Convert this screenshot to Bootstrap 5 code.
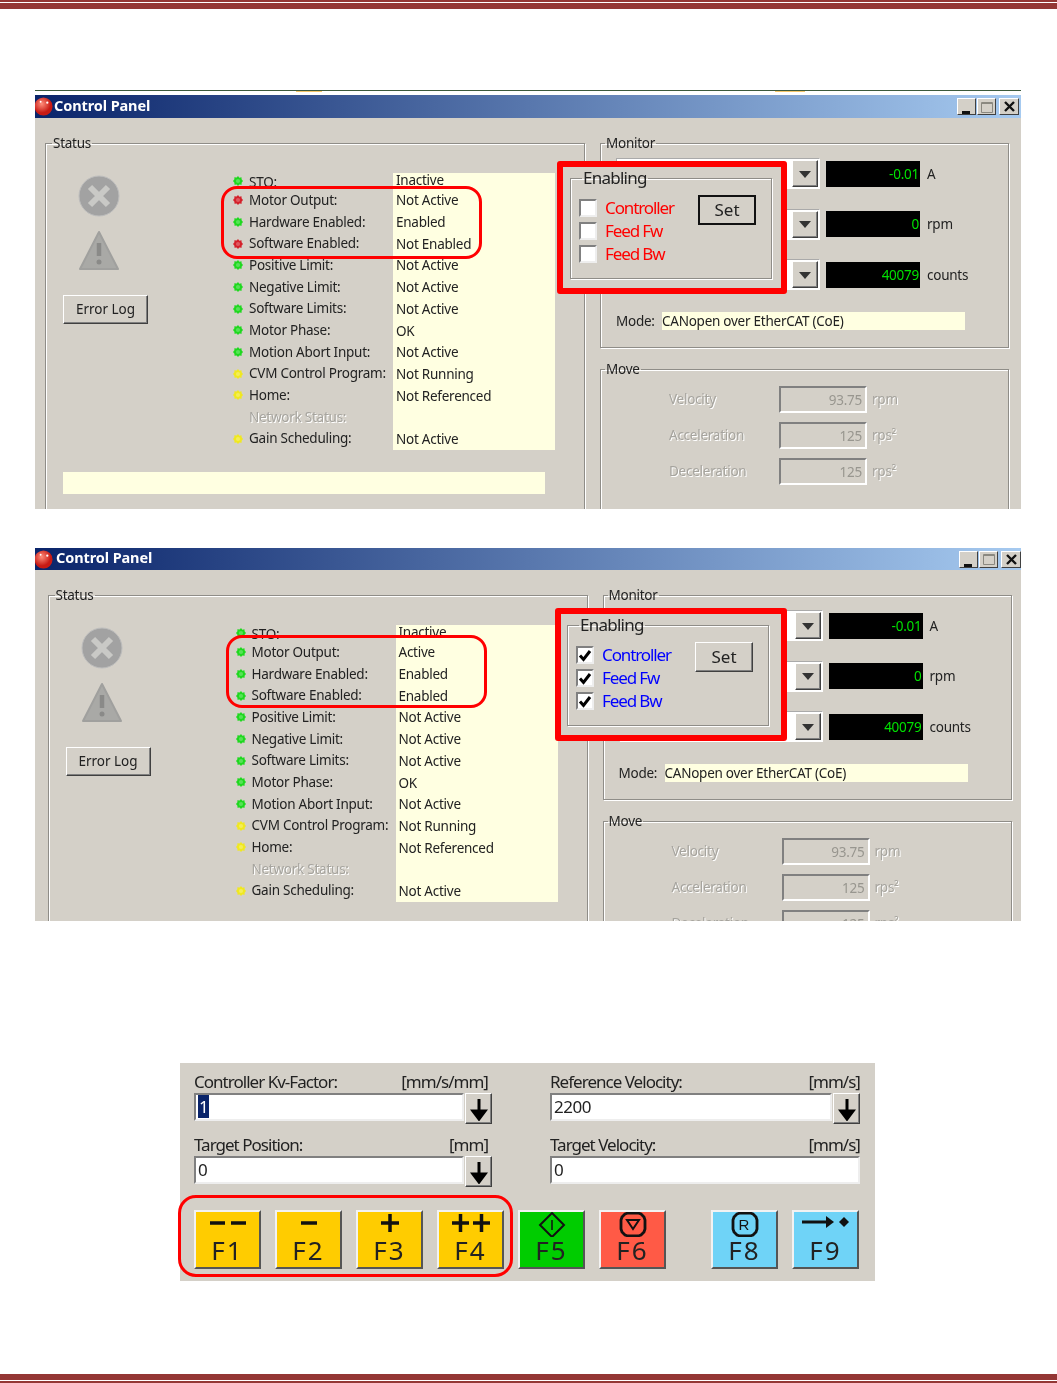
<!DOCTYPE html>
<html lang="en">
<head>
<meta charset="UTF-8">
<title>Control Panel</title>
<link href="https://cdn.jsdelivr.net/npm/bootstrap@5.3.0/dist/css/bootstrap.min.css" rel="stylesheet">
<style>
    body { background: #fff; font-family: "Noto Sans", sans-serif; font-size: 13.5px; letter-spacing: -.25px; color: #222; }
    .page { height: 1383px; overflow: hidden; }
    .rule-top { height: 9px; border-top: 2px solid #943634; flex: none; }
    .rule-top::after { content: ""; display: block; height: 6px; margin-top: 1px; background: #943634; }
    .rule-bottom { height: 9px; border-bottom: 2px solid #943634; flex: none; }
    .rule-bottom::before { content: ""; display: block; height: 6px; background: #943634; }

    .shot { position: relative; width: 986px; margin-left: 35px; overflow: hidden; flex: none; filter: blur(.4px); }
    .shot-one { height: 419px; margin-top: 81px; }
    .shot-two { height: 373px; margin-top: 39px; }
    .strip { height: 5px; border-top: 1px solid #3c5a3c; background: #fff; }
    .strip::before { content: ""; display: block; height: 1px; background: linear-gradient(90deg, transparent 261px, #f5c66a 261px, #f5c66a 287px, transparent 287px, transparent 740px, #f5c66a 740px, #f5c66a 770px, transparent 770px); }
    .title-bar { background: linear-gradient(90deg, #0a246a, #a6caf0); color: #fff; font-weight: 700; font-size: 14.5px; letter-spacing: -.1px; }
    .shot-one .title-bar { height: 23px; padding-right: 2px; }
    .shot-two .title-bar { height: 22px; }
    .title-ball { width: 19px; height: 19px; margin-left: -1px; }
    .title-name { margin: 0 0 2px 1px; }
    .shot-two .title-name { margin-left: 3px; }
    .win-btn { width: 19px; height: 17px; background: #d4d0c8; border: 1px solid; border-color: #fff #404040 #404040 #fff; }
    .win-max { margin-left: 1px; }
    .win-close { width: 20px; margin-left: 3px; }
    .panel-body { background: #d4d0c8; height: 400px; }
    .shot-one .panel-body { padding: 17px 0 0 10px; }
    .shot-two .panel-body { padding: 17px 0 0 12.5px; }

    .etched { border: 1px solid #8f8d88; box-shadow: inset 1px 1px 0 #fff, 1px 1px 0 #fff; padding: 0; }
    .etched legend { float: none; width: auto; font-size: 13.5px; line-height: 16px; margin: 0 0 0 6px; padding: 0 1px; color: #222; }
    .side .etched legend { margin-left: 4px; }
    .status-box { width: 540px; height: 520px; flex: none; }
    .status-top { padding-top: 22px; }
    .side { width: 409px; margin-left: 15px; flex: none; }
    .status-left { width: 186px; padding: 2px 0 0 17px; flex: none; }
    .status-icon { width: 42px; height: 42px; display: block; margin-left: 15px; }
    .status-gap { margin-top: 13px; }
    .xp-btn { background: #d4d0c8; border: 1px solid; border-color: #fff #404040 #404040 #fff; box-shadow: inset -1px -1px 0 #808080; color: #222; }
    .log-btn { width: 85px; height: 29px; margin-top: 23px; font-size: 13.5px; }
    .status-labels { width: 161px; flex: none; }
    .status-line { height: 21.7px; line-height: 23.7px; white-space: nowrap; }
    .status-line:first-child { height: 16.4px; line-height: 14px; }
    .status-name { margin-top: 1px; }
    .status-dot { width: 10px; height: 10px; margin: 0 6px 0 1px; flex: none; }
    .status-off { color: #a6a49e; text-shadow: 1px 1px 0 #fff; padding-left: 17px; }
    .status-values { width: 162px; height: 277px; background: #ffffe1; padding-left: 3px; flex: none; }
    .status-bar { width: 482px; height: 22px; background: #ffffe1; margin: 22px 0 0 17px; }

    .monitor-box { height: 213px; }
    .monitor-inner { padding: 7px 0 0 15px; }
    .combo { width: 204px; height: 31px; background: #fff; border: 1px solid; border-color: #aaa #fff #fff #aaa; padding: 1px; flex: none; }
    .combo-btn { width: 26px; height: 27px; }
    .combo-btn::after { content: ""; border: 6px solid transparent; border-top: 7px solid #333; margin-top: 7px; }
    .readout { width: 94px; height: 26px; background: #000; color: #00e000; margin-left: 6px; padding-right: 1px; line-height: 27px; flex: none; }
    .readout-unit { margin: 1px 0 0 7px; }
    .monitor-row { margin-bottom: 19.5px; }
    .mode-row { margin-top: 21px; }
    .mode-label { width: 46px; flex: none; }
    .mode-value { width: 303px; height: 18px; line-height: 18px; background: #ffffe1; }
    .move-box { margin-top: 13px; height: 300px; }
    .move-inner { padding: 9px 0 0 68px; }
    .move-row { height: 27px; margin-bottom: 9px; color: #a6a49e; text-shadow: 1px 1px 0 #fff; }
    .move-label { width: 110px; }
    .move-value { width: 88px; height: 27px; line-height: 25px; border: 2px solid; border-color: #808080 #fff #fff #808080; padding-right: 3px; margin-right: 5px; color: #98968f; text-shadow: none; }

    .hilite { position: absolute; border: 3.500px solid #f00; border-radius: 16px; pointer-events: none; }
    .hilite-status { width: 261px; height: 73px; }
    .shot-one .hilite-status { left: 186px; top: 96px; }
    .shot-two .hilite-status { left: 191px; top: 87px; }
    .hilite-keys { left: -2px; top: 132px; width: 335px; height: 82px; border-radius: 18px; }
    .enable-cover { position: absolute; height: 133px; border: 6px solid #f00; border-radius: 3px; background: #d4d0c8; }
    .shot-one .enable-cover { left: 522px; top: 71px; width: 230px; padding-left: 7px; }
    .shot-two .enable-cover { left: 520px; top: 60px; width: 232px; padding-left: 6px; }
    .enable-box { width: 202px; height: 111px; margin-top: 1px; }
    .enable-box legend { font-size: 17px; line-height: 20px; margin-left: 11px; letter-spacing: -.75px; }
    .enable-inner { padding: 11px 0 0 8px; }
    .check-col { width: 94px; flex: none; }
    .check-row { font-size: 17px; line-height: 18px; height: 18px; letter-spacing: -1.1px; white-space: nowrap; }
    .check-row + .check-row { margin-top: 5px; }
    .check-box { width: 18px; height: 18px; background: #fff; border: 2px solid; border-color: #808080 #eee #eee #808080; margin-right: 8px; flex: none; }
    .check-on { color: #00f; }
    .check-off { color: #f00; }
    .set-btn { width: 58px; height: 30px; margin: -4px 0 0 25px; font-size: 17px; line-height: 26px; letter-spacing: 0; }
    .set-focus { border: 2px solid #111; box-shadow: none; }

    .drive-panel { position: relative; width: 695px; height: 218px; margin: 142px 0 0 180px; background: #d4d0c8; padding: 9px 0 0 14px; flex: none; filter: blur(.4px); font-size: 17px; letter-spacing: -.45px; }
    .drive-col { width: 298px; flex: none; }
    .drive-col-wide { width: 310px; margin-left: 58px; flex: none; }
    .drive-label { height: 21px; line-height: 19px; letter-spacing: -.98px; }
    .drive-input { height: 28px; line-height: 24px; background: #fff; border: 2px solid; border-color: #808080 #eee #eee #808080; padding-left: 2px; }
    .drive-field { height: 42px; }
    .drive-select { background: #0a246a; color: #fff; padding: 0 1px; }
    .drive-drop { width: 27px; height: 31px; flex: none; margin-left: 1px; }
    .fkey-row { margin-top: 12px; letter-spacing: 2px; }
    .fkey { width: 67px; height: 59px; border: 2px solid; border-color: #f2f2f2 #555 #555 #f2f2f2; font-size: 26px; line-height: 26px; flex: none; padding: 0; color: #222; margin-left: 14px; }
    .fkey:first-child { margin-left: 0; }
    .fkey-wide { margin-left: 45px; }
    .fkey svg { display: block; width: 50px; height: 25px; margin: 0 auto; }
    .fkey-yellow { background: #ffcc00; }
    .fkey-green { background: #00cc00; }
    .fkey-red { background: #ff5a46; }
    .fkey-blue { background: #6fd3f7; }
</style>
</head>
<body>
<div class="page d-flex flex-column">
    <div class="rule-top"></div>
    <div id="shotOne" class="shot shot-one"></div>
    <div id="shotTwo" class="shot shot-two"></div>

    <div class="drive-panel">
        <div class="d-flex">
            <div class="drive-col">
                <div class="drive-label d-flex justify-content-between"><span>Controller Kv-Factor:</span><span class="me-1">[mm/s/mm]</span></div>
                <div class="d-flex drive-field">
                    <div class="drive-input flex-grow-1"><span class="drive-select">1</span></div>
                    <div class="xp-btn drive-drop d-flex justify-content-center align-items-center"><svg width="18" height="24" viewBox="0 0 18 24"><path d="M9 2v18M3 14l6 8 6-8z" stroke="#000" stroke-width="3" fill="#000"/></svg></div>
                </div>
                <div class="drive-label d-flex justify-content-between"><span>Target Position:</span><span class="me-1">[mm]</span></div>
                <div class="d-flex drive-field">
                    <div class="drive-input flex-grow-1">0</div>
                    <div class="xp-btn drive-drop d-flex justify-content-center align-items-center"><svg width="18" height="24" viewBox="0 0 18 24"><path d="M9 2v18M3 14l6 8 6-8z" stroke="#000" stroke-width="3" fill="#000"/></svg></div>
                </div>
            </div>
            <div class="drive-col-wide">
                <div class="drive-label d-flex justify-content-between"><span>Reference Velocity:</span><span>[mm/s]</span></div>
                <div class="d-flex drive-field">
                    <div class="drive-input flex-grow-1">2200</div>
                    <div class="xp-btn drive-drop d-flex justify-content-center align-items-center"><svg width="18" height="24" viewBox="0 0 18 24"><path d="M9 2v18M3 14l6 8 6-8z" stroke="#000" stroke-width="3" fill="#000"/></svg></div>
                </div>
                <div class="drive-label d-flex justify-content-between"><span>Target Velocity:</span><span>[mm/s]</span></div>
                <div class="drive-input">0</div>
            </div>
        </div>
        <div class="d-flex fkey-row" id="fkeys"></div>
        <div class="hilite hilite-keys"></div>
    </div>

    <div class="rule-bottom mt-auto"></div>
</div>

<script>
const dot = c => `<svg class="status-dot" viewBox="0 0 12 12"><path d="M6 0l1.600 2 2.600-.6.1 2.600L12 6l-1.700 2 .1 2.600-2.800-.4L6 12l-1.600-1.800-2.600.4-.1-2.600L0 6l1.700-2-.1-2.600 2.800.4z" fill="${c}"/><circle cx="6" cy="6" r="2.500" fill="#fff" opacity=".25"/></svg>`;
const GREEN = '#1fd81f', RED = '#d4202a', YEL = '#f0e820';

function statusRows(live) {
    return [
        ['STO:', GREEN, 'Inactive'],
        ['Motor Output:', live ? GREEN : RED, live ? 'Active' : 'Not Active'],
        ['Hardware Enabled:', GREEN, 'Enabled'],
        ['Software Enabled:', live ? GREEN : RED, live ? 'Enabled' : 'Not Enabled'],
        ['Positive Limit:', GREEN, 'Not Active'],
        ['Negative Limit:', GREEN, 'Not Active'],
        ['Software Limits:', GREEN, 'Not Active'],
        ['Motor Phase:', GREEN, 'OK'],
        ['Motion Abort Input:', GREEN, 'Not Active'],
        ['CVM Control Program:', YEL, 'Not Running'],
        ['Home:', YEL, 'Not Referenced'],
        ['Network Status:', null, ''],
        ['Gain Scheduling:', YEL, 'Not Active']
    ];
}

function panel(live) {
    const rows = statusRows(live);
    const labels = rows.map(r => r[1]
        ? `<div class="status-line d-flex align-items-center">${dot(r[1])}<span class="status-name">${r[0]}</span></div>`
        : `<div class="status-line status-off">${r[0]}</div>`).join('');
    const values = rows.map(r => `<div class="status-line">${r[2] || '&nbsp;'}</div>`).join('');
    const monitor = [['-0.01', 'A'], ['0', 'rpm'], ['40079', 'counts']].map(m => `
        <div class="d-flex align-items-center monitor-row">
            <div class="combo d-flex justify-content-end"><div class="xp-btn combo-btn d-flex justify-content-center align-items-center"></div></div>
            <div class="readout text-end">${m[0]}</div><div class="readout-unit">${m[1]}</div>
        </div>`).join('');
    const move = [['Velocity', '93.75', 'rpm'], ['Acceleration', '125', 'rps²'], ['Deceleration', '125', 'rps²']].map(m => `
        <div class="d-flex align-items-center move-row"><div class="move-label">${m[0]}</div><div class="move-value text-end">${m[1]}</div><div>${m[2]}</div></div>`).join('');
    const tick = `<svg width="15" height="15" viewBox="0 0 14 14"><path d="M2 7l3.500 4L12 2.500" fill="none" stroke="#000" stroke-width="3"/></svg>`;
    const checks = ['Controller', 'Feed Fw', 'Feed Bw'].map(n => `
        <div class="check-row d-flex align-items-center"><span class="check-box d-flex justify-content-center align-items-center">${live ? tick : ''}</span><span class="${live ? 'check-on' : 'check-off'}">${n}</span></div>`).join('');
    return `
    ${live ? '' : '<div class="strip"></div>'}
    <div class="title-bar d-flex align-items-center">
        <svg class="title-ball" viewBox="0 0 20 20"><defs><radialGradient id="b${live}" cx=".4" cy=".35"><stop offset="0" stop-color="#ff8d7a"/><stop offset="1" stop-color="#c81a14"/></radialGradient></defs><circle cx="10" cy="10" r="9.500" fill="url(#b${live})"/><circle cx="14" cy="6" r="1.200" fill="#fff"/><circle cx="7" cy="5" r="1" fill="#fff"/></svg>
        <span class="title-name">Control Panel</span>
        <div class="ms-auto d-flex">
            <div class="win-btn d-flex justify-content-center align-items-end"><svg width="9" height="6" viewBox="0 0 9 6"><path d="M0 3h8v3H0z" fill="#111"/></svg></div>
            <div class="win-btn win-max d-flex justify-content-center align-items-center"><svg width="12" height="12" viewBox="0 0 12 12"><path d="M.5 1.500h11v10H.5zM.5 2.500h11" fill="none" stroke="#8a8880"/></svg></div>
            <div class="win-btn win-close d-flex justify-content-center align-items-center"><svg width="11" height="11" viewBox="0 0 11 11"><path d="M1 1l9 9M10 1l-9 9" stroke="#111" stroke-width="2.400"/></svg></div>
        </div>
    </div>
    <div class="panel-body d-flex">
        <fieldset class="etched status-box">
            <legend>Status</legend>
            <div class="d-flex status-top">
                <div class="status-left">
                    <svg class="status-icon" viewBox="0 0 42 42"><circle cx="21" cy="21" r="20" fill="#a2a2a2" stroke="#bdbdbd"/><path d="M12 12l18 18M30 12L12 30" stroke="#c9c9c6" stroke-width="6"/></svg>
                    <svg class="status-icon status-gap" viewBox="0 0 42 42"><path d="M21 2l19 37H2z" fill="#a9a9a6" stroke="#a0a09e" stroke-width="2" stroke-linejoin="round"/><path d="M21 13v13" stroke="#8a8a88" stroke-width="4.500"/><circle cx="21" cy="32" r="2.500" fill="#8a8a88"/></svg>
                    <button class="xp-btn log-btn p-0" type="button">Error Log</button>
                </div>
                <div class="status-labels">${labels}</div>
                <div class="status-values">${values}</div>
            </div>
            <div class="status-bar"></div>
        </fieldset>
        <div class="side">
            <fieldset class="etched monitor-box">
                <legend>Monitor</legend>
                <div class="monitor-inner">
                    ${monitor}
                    <div class="d-flex align-items-center mode-row"><span class="mode-label">Mode:</span><div class="mode-value">CANopen over EtherCAT (CoE)</div></div>
                </div>
            </fieldset>
            <fieldset class="etched move-box">
                <legend>Move</legend>
                <div class="move-inner">${move}</div>
            </fieldset>
        </div>
    </div>
    <div class="hilite hilite-status"></div>
    <div class="enable-cover">
        <fieldset class="etched enable-box">
            <legend>Enabling</legend>
            <div class="d-flex enable-inner">
                <div class="check-col">${checks}</div>
                <button class="xp-btn set-btn p-0 ${live ? '' : 'set-focus'}" type="button">Set</button>
            </div>
        </fieldset>
    </div>`;
}

document.getElementById('shotOne').innerHTML = panel(false);
document.getElementById('shotTwo').innerHTML = panel(true);

const ring = inner => `<svg viewBox="0 0 50 25"><path d="M17 2l3-1h10l3 1 3 3 1 3v9l-1 3-3 3-3 1H20l-3-1-3-3-1-3V8l1-3z" fill="none" stroke="#111" stroke-width="2.800"/>${inner}</svg>`;
const keyIcons = {
    F1: '<svg viewBox="0 0 50 25"><path d="M7 11h15M28 11h15" stroke="#111" stroke-width="3.500"/></svg>',
    F2: '<svg viewBox="0 0 50 25"><path d="M17 11h16" stroke="#111" stroke-width="3.500"/></svg>',
    F3: '<svg viewBox="0 0 50 25"><path d="M16 11h18M25 2v18" stroke="#111" stroke-width="3.500"/></svg>',
    F4: '<svg viewBox="0 0 50 25"><path d="M6 11h17M14.500 2v18M27 11h17M35.500 2v18" stroke="#111" stroke-width="3.500"/></svg>',
    F5: '<svg viewBox="0 0 50 25"><path d="M25 1l12 12-12 12-12-12z" fill="none" stroke="#111" stroke-width="2"/><path d="M25 8v10" stroke="#111" stroke-width="1.500"/></svg>',
    F6: ring('<path d="M19 8h12l-6 9z" fill="none" stroke="#111" stroke-width="2"/>'),
    F8: ring('<text x="25" y="18" text-anchor="middle" font-size="15" font-family="Liberation Sans" fill="#111">R</text>'),
    F9: '<svg viewBox="0 0 50 25"><path d="M1 10h25" stroke="#111" stroke-width="3"/><path d="M25 4l8 6-8 6z" fill="#111"/><path d="M43 5l5 5-5 5-5-5z" fill="#111"/></svg>'
};
const keys = [['F1', 'yellow'], ['F2', 'yellow'], ['F3', 'yellow'], ['F4', 'yellow'], ['F5', 'green'], ['F6', 'red'], ['F8', 'blue'], ['F9', 'blue']];
document.getElementById('fkeys').innerHTML = keys.map(k => `
    <div class="fkey fkey-${k[1]} text-center ${k[0] == 'F8' ? 'fkey-wide' : ''}">${keyIcons[k[0]]}<div>${k[0]}</div></div>`).join('');
</script>
<script src="https://cdn.jsdelivr.net/npm/bootstrap@5.3.0/dist/js/bootstrap.bundle.min.js"></script>
</body>
</html>
